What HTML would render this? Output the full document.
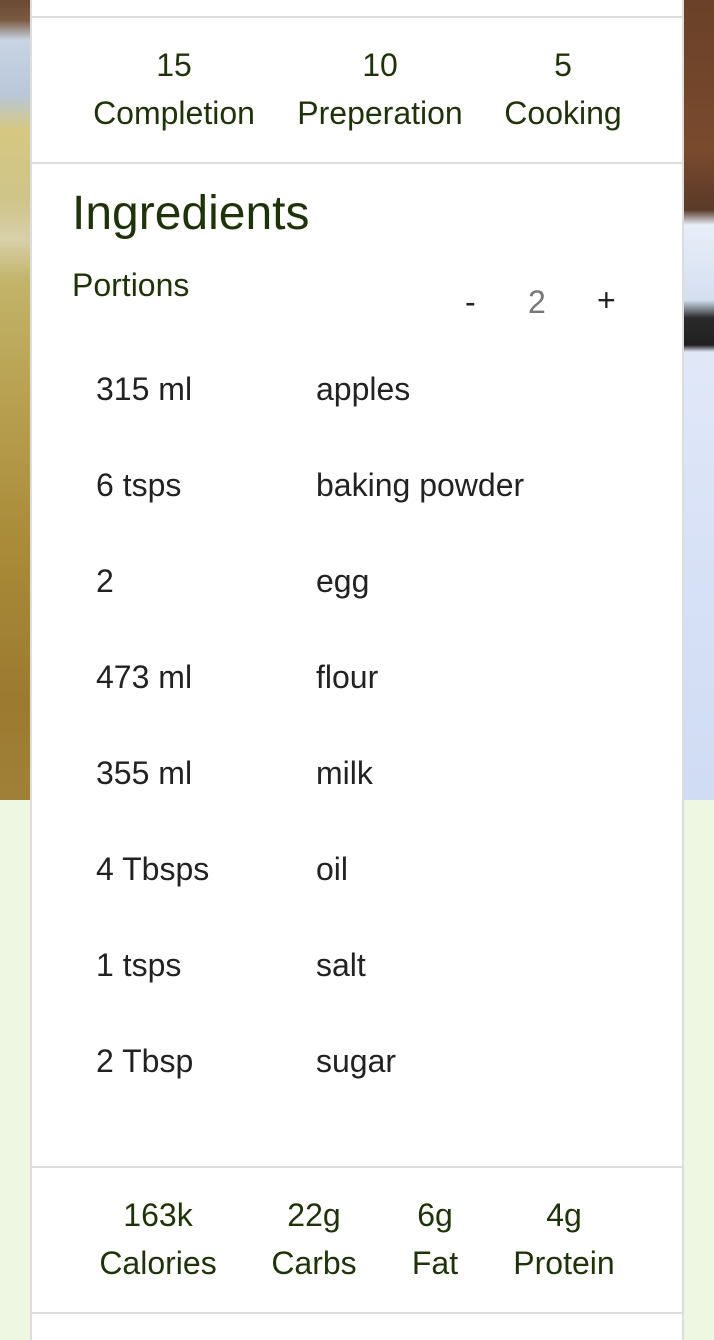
<!DOCTYPE html>
<html><head><style>
body{margin:0;width:714px;height:1334px;background:#eef7e2;position:relative;overflow:hidden;font-family:"Liberation Sans",sans-serif}
.bgl{position:absolute;left:0;top:0;width:32px;height:800px;background:linear-gradient(180deg,#6b4a35 0,#7a5a40 20px,#c8d4e4 40px,#b9c7d8 95px,#d6c882 130px,#cfc489 200px,#d8d0a8 240px,#c2b46a 280px,#b8a050 400px,#a88a38 550px,#9c7a30 700px,#a08038 800px)}
.bgr{position:absolute;left:682px;top:0;width:32px;height:800px;background:linear-gradient(180deg,#6a4128 0,#7a4a2e 150px,#5a3a28 210px,#e8eef8 225px,#d4dff0 300px,#2a2a2a 318px,#202020 345px,#e0e8f8 352px,#d6e0f6 600px,#d0dcf4 800px)}
.card{position:absolute;left:30px;top:0;width:650px;height:1340px;background:#fff;border-left:2px solid #ddd;border-right:2px solid #ddd}
.hr{position:absolute;left:0;right:0;height:2px;background:#ddd}
.s{position:absolute;text-align:center;color:#1f330a;font-size:32px;line-height:48px;transform:translateX(-50%);white-space:nowrap}
.t{position:absolute;color:#222;font-size:32px;white-space:nowrap}
</style></head><body>
<div class="bgl"></div><div class="bgr"></div>
<div class="card">
<div class="hr" style="top:16px"></div>
<div class="hr" style="top:162px"></div>
<div class="s" style="left:142px;top:41px">15<br>Completion</div>
<div class="s" style="left:348px;top:41px">10<br>Preperation</div>
<div class="s" style="left:531px;top:41px">5<br>Cooking</div>
<div class="t" style="left:40px;top:186px;font-size:48px;color:#1f330a">Ingredients</div>
<div class="t" style="left:40px;top:267px;color:#1f330a">Portions</div>
<div class="t" style="left:433px;top:284px">-</div>
<div class="t" style="left:496px;top:284px;color:#777">2</div>
<div class="t" style="left:565px;top:282px">+</div>
<div class="t" style="left:64px;top:371px">315 ml</div><div class="t" style="left:284px;top:371px">apples</div>
<div class="t" style="left:64px;top:467px">6 tsps</div><div class="t" style="left:284px;top:467px">baking powder</div>
<div class="t" style="left:64px;top:563px">2</div><div class="t" style="left:284px;top:563px">egg</div>
<div class="t" style="left:64px;top:659px">473 ml</div><div class="t" style="left:284px;top:659px">flour</div>
<div class="t" style="left:64px;top:755px">355 ml</div><div class="t" style="left:284px;top:755px">milk</div>
<div class="t" style="left:64px;top:851px">4 Tbsps</div><div class="t" style="left:284px;top:851px">oil</div>
<div class="t" style="left:64px;top:947px">1 tsps</div><div class="t" style="left:284px;top:947px">salt</div>
<div class="t" style="left:64px;top:1043px">2 Tbsp</div><div class="t" style="left:284px;top:1043px">sugar</div>
<div class="hr" style="top:1166px"></div>
<div class="s" style="left:126px;top:1191px">163k<br>Calories</div>
<div class="s" style="left:282px;top:1191px">22g<br>Carbs</div>
<div class="s" style="left:403px;top:1191px">6g<br>Fat</div>
<div class="s" style="left:532px;top:1191px">4g<br>Protein</div>
<div class="hr" style="top:1312px"></div>
</div>
</body></html>
